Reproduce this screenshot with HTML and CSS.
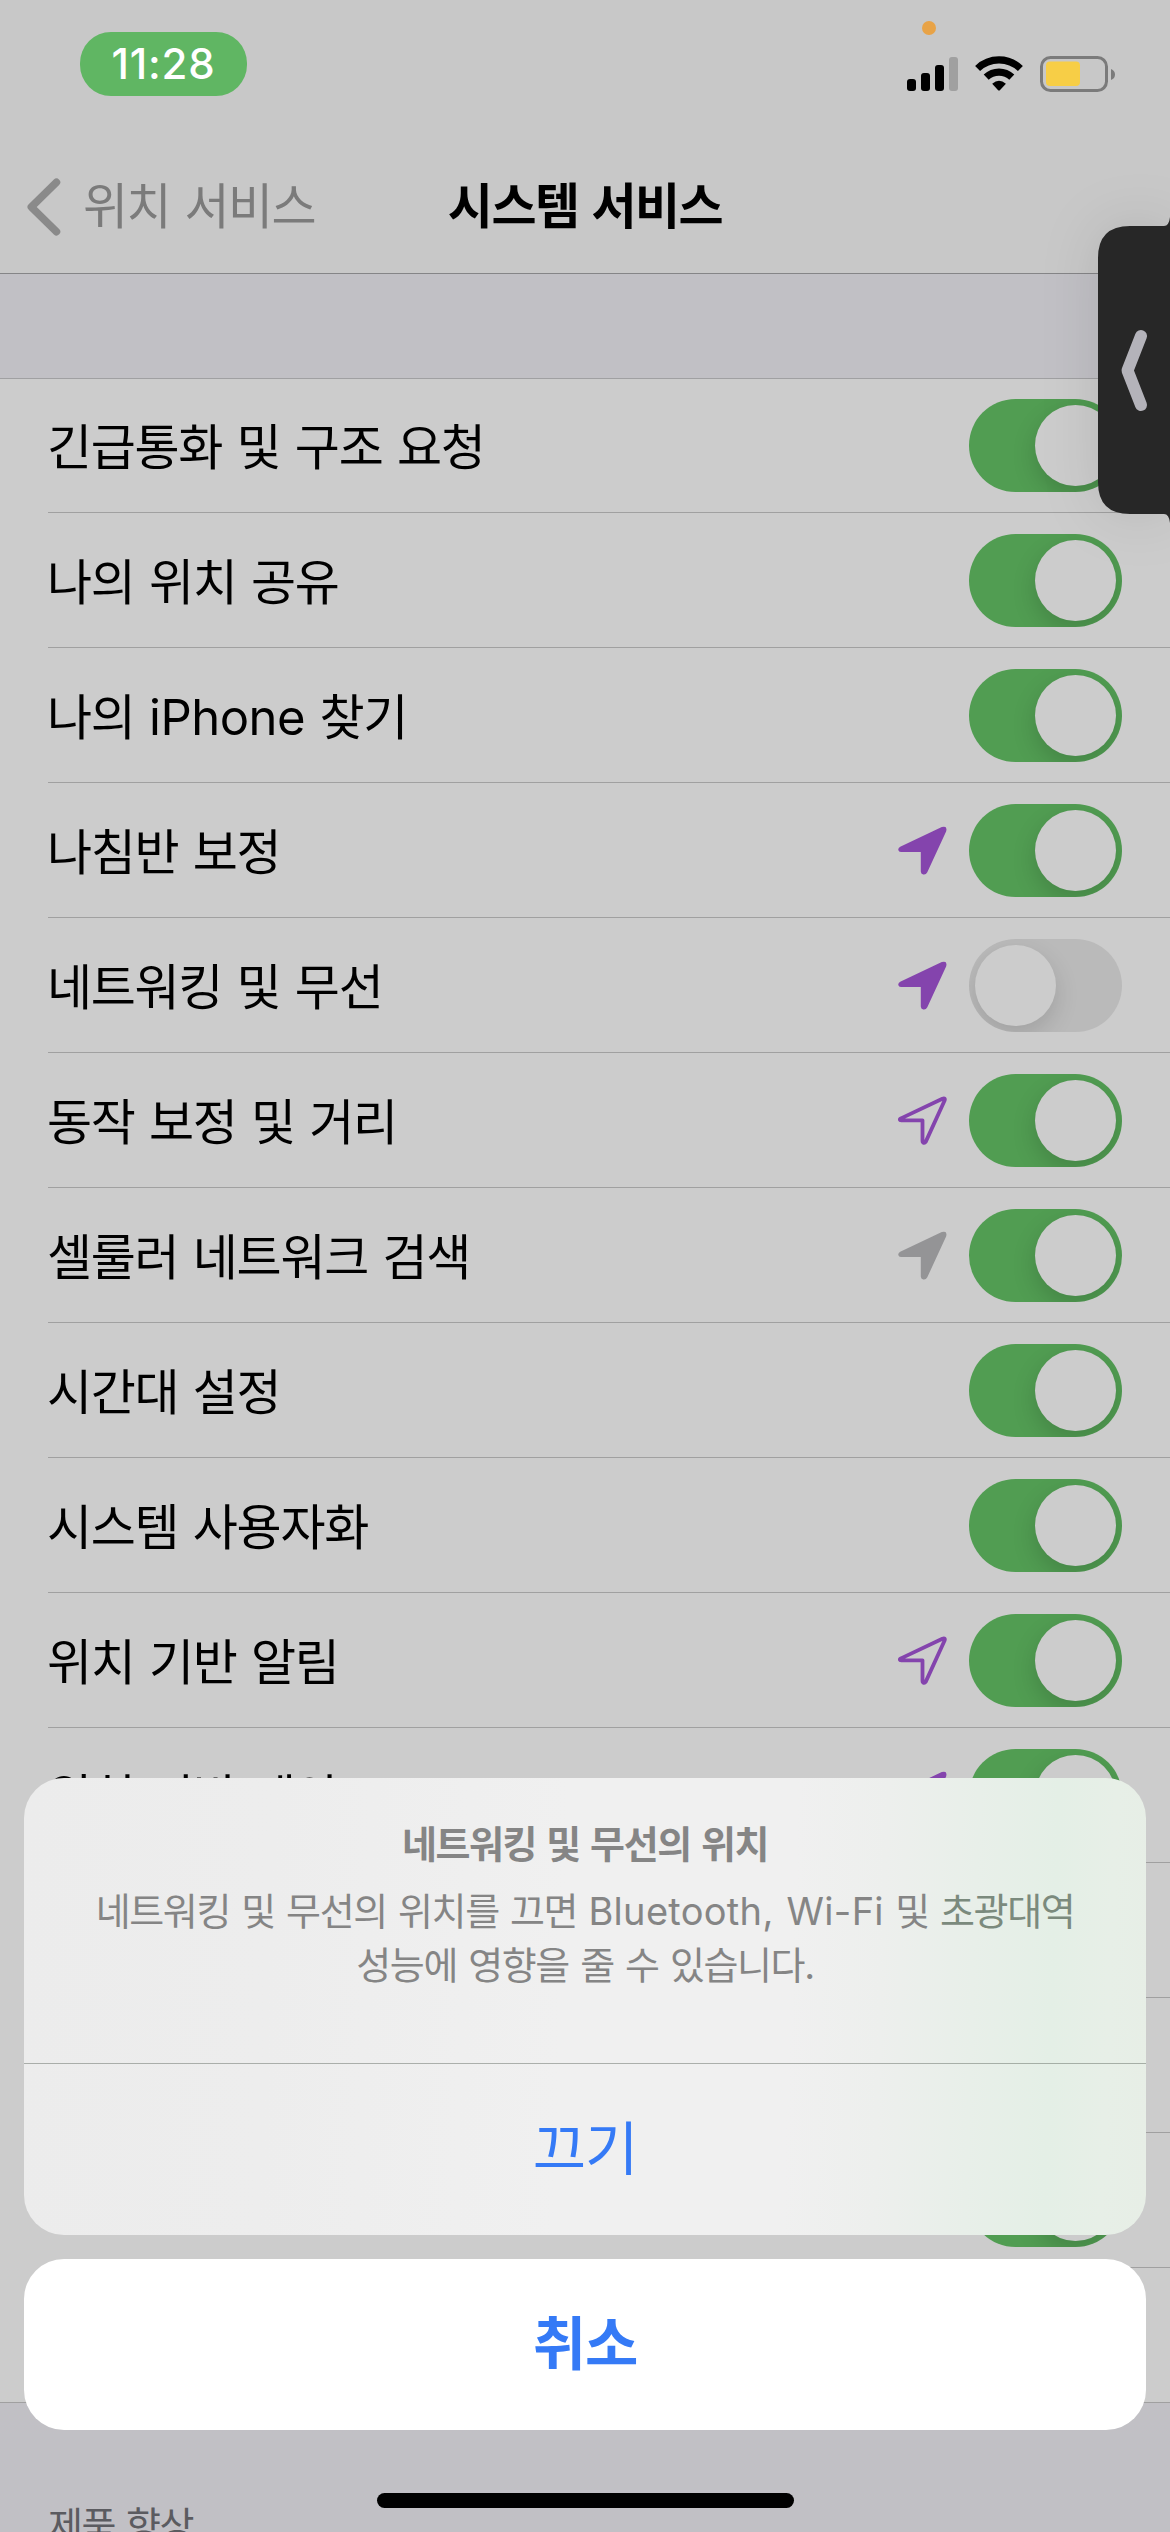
FILE: index.html
```html
<!DOCTYPE html>
<html lang="ko">
<head>
<meta charset="utf-8">
<title>시스템 서비스</title>
<link rel="stylesheet" href="styles.css">
</head>
<body>
<svg width="0" height="0" class="defs">
  <symbol id="arrow-solid" viewBox="0 0 49 49">
    <path d="M2.2 20.7 L43.8 1.1 Q49.8 -0.6 48.1 5.4 L29.3 46.3 Q27.8 49 25.2 48.4 Q22.8 47.7 22.8 45.4 V26 H3 Q0.6 26 0.3 24 Q0 22 2.2 20.7 Z" fill="currentColor"/>
  </symbol>
  <symbol id="arrow-line" viewBox="0 0 49 49">
    <path d="M3 22.4 L44.4 2.7 Q47.8 1.6 46.5 4.8 L27.8 45.6 Q26.6 47.4 25.2 46.6 Q24.5 46 24.5 45 V24.3 H3.4 Q1.8 24.2 1.8 23.4 Q1.9 22.8 3 22.4 Z" fill="none" stroke="currentColor" stroke-width="3.8" stroke-linejoin="round"/>
  </symbol>
</svg>
<div class="screen">
  <header class="header">
    <div class="status">
      <div class="time">11:28</div>
      <svg class="status-icons" width="210" height="76" viewBox="0 0 210 76">
        <circle cx="24" cy="12" r="7" fill="#e8a347"/>
        <rect x="2" y="63" width="9" height="12" rx="3"/>
        <rect x="16" y="57" width="9" height="18" rx="3"/>
        <rect x="30" y="49" width="9" height="26" rx="3"/>
        <rect x="44" y="41" width="9" height="34" rx="3" fill="#a0a0a0"/>
        <path d="M72.6 52.5 A31 31 0 0 1 115.400 52.5" fill="none" stroke="#000" stroke-width="7.200"/>
        <path d="M81.200 61.200 A18.500 18.500 0 0 1 106.800 61.200" fill="none" stroke="#000" stroke-width="7.200"/>
        <path d="M87.200 67.800 Q94 61.500 100.900 67.800 L95.100 73.900 Q94 75 92.900 73.900 Z"/>
        <rect x="136.500" y="41.500" width="65" height="33" rx="9" fill="none" stroke="#7b7b7b" stroke-width="3"/>
        <rect x="141" y="45.500" width="34" height="24.500" rx="4" fill="#f7ce46"/>
        <path d="M206 53 Q210 54.500 210 58.500 Q210 62.500 206 64 Z" fill="#7b7b7b"/>
      </svg>
    </div>
    <nav class="nav">
      <div class="back">
        <svg width="34" height="58" viewBox="0 0 34 58"><path d="M29.500 4.300 L4.300 29 L29.500 53.700" fill="none" stroke="#8a8a8a" stroke-width="7.500" stroke-linecap="round" stroke-linejoin="round"/></svg>
        <span>위치 서비스</span>
      </div>
      <h1 class="title">시스템 서비스</h1>
    </nav>
  </header>

  <ul class="list">
    <li class="row"><span class="label">긴급통화 및 구조 요청</span><i class="toggle"></i></li>
    <li class="row"><span class="label">나의 위치 공유</span><i class="toggle"></i></li>
    <li class="row"><span class="label">나의 <span class="latin">iPhone</span> 찾기</span><i class="toggle"></i></li>
    <li class="row"><span class="label">나침반 보정</span><svg class="arrow"><use href="#arrow-solid"/></svg><i class="toggle"></i></li>
    <li class="row"><span class="label">네트워킹 및 무선</span><svg class="arrow"><use href="#arrow-solid"/></svg><i class="toggle off"></i></li>
    <li class="row"><span class="label">동작 보정 및 거리</span><svg class="arrow"><use href="#arrow-line"/></svg><i class="toggle"></i></li>
    <li class="row"><span class="label">셀룰러 네트워크 검색</span><svg class="arrow past"><use href="#arrow-solid"/></svg><i class="toggle"></i></li>
    <li class="row"><span class="label">시간대 설정</span><i class="toggle"></i></li>
    <li class="row"><span class="label">시스템 사용자화</span><i class="toggle"></i></li>
    <li class="row"><span class="label">위치 기반 알림</span><svg class="arrow"><use href="#arrow-line"/></svg><i class="toggle"></i></li>
    <li class="row"><span class="label">위치 기반 제안</span><svg class="arrow"><use href="#arrow-solid"/></svg><i class="toggle"></i></li>
    <li class="row"></li>
    <li class="row"></li>
    <li class="row"><i class="toggle"></i></li>
    <li class="row"></li>
  </ul>
  <div class="footer">제품 향상</div>

  <div class="side-tab">
    <svg width="72" height="300" viewBox="0 0 72 300">
      <path d="M0 38 Q0 6 32 6 H66 Q71 6 72 -3 V303 Q71 294 66 294 H32 Q0 294 0 262 Z" fill="#272727"/>
      <path d="M43 116 L29.500 150.500 L43 185" fill="none" stroke="#b4b3ba" stroke-width="12" stroke-linecap="round" stroke-linejoin="round"/>
    </svg>
  </div>

  <section class="sheet">
    <div class="panel">
      <div class="message">
        <h2>네트워킹 및 무선의 위치</h2>
        <p>네트워킹 및 무선의 위치를 끄면 <span class="latin">Bluetooth, Wi-Fi</span> 및 <span class="tinted">초광대역</span><br>성능에 영향을 줄 수 있습니다.</p>
      </div>
      <button class="action">끄기</button>
    </div>
    <button class="action cancel">취소</button>
  </section>
  <div class="home"></div>
</div>
</body>
</html>
```
FILE: styles.css
```css
* { box-sizing: border-box; margin: 0; padding: 0; }

body {
  width: 1170px;
  height: 2532px;
  overflow: hidden;
  font-family: Inter, "Noto Sans CJK KR", sans-serif;
}

.defs { position: absolute; }

.screen {
  position: relative;
  height: 2532px;
  overflow: hidden;
  background: #c1c0c5;
}

/* Status bar and navigation */
.header {
  height: 274px;
  background: #c8c8c8;
  border-bottom: 1px solid #858587;
}

.status {
  display: flex;
  justify-content: space-between;
  align-items: flex-start;
  height: 141px;
  padding: 16px 55px 0 80px;
}

.time {
  width: 167px;
  height: 64px;
  margin-top: 16px;
  border-radius: 31px;
  background: #60b663;
  color: #fff;
  font-size: 42px;
  font-weight: 500;
  line-height: 64px;
  text-align: center;
  letter-spacing: 0.8px;
}

.nav {
  display: grid;
  grid-template-columns: 1fr auto 1fr;
  align-items: center;
  height: 132px;
  font-size: 49px;
  letter-spacing: -1.5px;
  word-spacing: 2px;
}

.back {
  display: flex;
  align-items: center;
  gap: 22px;
  padding-left: 27px;
  color: #7b7b7b;
}

.back span { line-height: 60px; }

.title {
  font-size: 49px;
  font-weight: 600;
  line-height: 60px;
}

/* Settings list */
.list {
  margin-top: 104px;
  list-style: none;
  background: #ccc;
  box-shadow: inset 0 1px #a0a0a2;
}

.row {
  display: flex;
  align-items: center;
  justify-content: flex-end;
  height: 135px;
  padding-right: 48px;
  margin-left: 48px;
  box-shadow: inset 0 -1px #a0a0a0;
}

.row:last-child {
  margin-left: 0;
}

.label {
  flex: 1;
  padding-top: 5px;
  margin-left: -1px;
  font-size: 49px;
  line-height: 60px;
  letter-spacing: -1.3px;
  word-spacing: 2px;
}

.label .latin { letter-spacing: -0.5px; }

.arrow {
  width: 49px;
  height: 49px;
  margin-right: 22px;
  color: #8444ad;
}

.arrow.past { color: #949496; }

.toggle {
  display: flex;
  justify-content: flex-end;
  width: 153px;
  height: 93px;
  padding: 6px;
  border-radius: 47px;
  background: #519d52;
  overflow: hidden;
}

.toggle::after {
  content: "";
  width: 81px;
  height: 81px;
  border-radius: 50%;
  background: #ccc;
  box-shadow: 0 9px 24px rgba(0, 0, 0, 0.16);
}

.toggle.off {
  justify-content: flex-start;
  background: #bababa;
}

.toggle.off::after { box-shadow: 0 9px 24px rgba(0, 0, 0, 0.14); }

.footer {
  padding: 95px 48px 0;
  color: #5b5b60;
  font-size: 38px;
  line-height: 54px;
  letter-spacing: -1.5px;
  word-spacing: 2px;
}

/* Collapsed tab on the right edge */
.side-tab {
  position: absolute;
  top: 220px;
  right: 0;
  width: 72px;
  height: 300px;
}

.side-tab svg {
  display: block;
  overflow: visible;
  filter: drop-shadow(0 0 28px rgba(0, 0, 0, 0.1));
}

/* Action sheet */
.sheet {
  position: absolute;
  left: 24px;
  right: 24px;
  top: 1778px;
  display: flex;
  flex-direction: column;
  gap: 24px;
}

.panel {
  height: 457px;
  border-radius: 40px;
  overflow: hidden;
  background: linear-gradient(92deg, #ececec 0%, #ededed 22%, #f0f0f0 48%, #f0f0f0 68%, #edefed 76%, #e8efe9 84%, #e4efe6 91%, #e7efe7 96%, #e7eee6 100%);
}

.message {
  height: 286px;
  padding-top: 39px;
  border-bottom: 1px solid rgba(80, 90, 80, 0.43);
  color: #858585;
  font-size: 38px;
  line-height: 54px;
  letter-spacing: -1.4px;
  word-spacing: 2px;
  text-align: center;
}

.message h2 {
  font-size: 38px;
  font-weight: 600;
}

.message p { margin-top: 13px; }

.message .latin { letter-spacing: 0.3px; }
.tinted { color: #7b8a7d; }

.action {
  display: block;
  width: 100%;
  height: 171px;
  padding-bottom: 9px;
  border: 0;
  background: none;
  color: #357af6;
  font-family: inherit;
  font-size: 58px;
  letter-spacing: -1px;
}

.cancel {
  border-radius: 40px;
  background: #fff;
  font-weight: 600;
}

.home {
  position: absolute;
  left: 377px;
  bottom: 24px;
  width: 417px;
  height: 15px;
  border-radius: 8px;
  background: #000;
}
```
